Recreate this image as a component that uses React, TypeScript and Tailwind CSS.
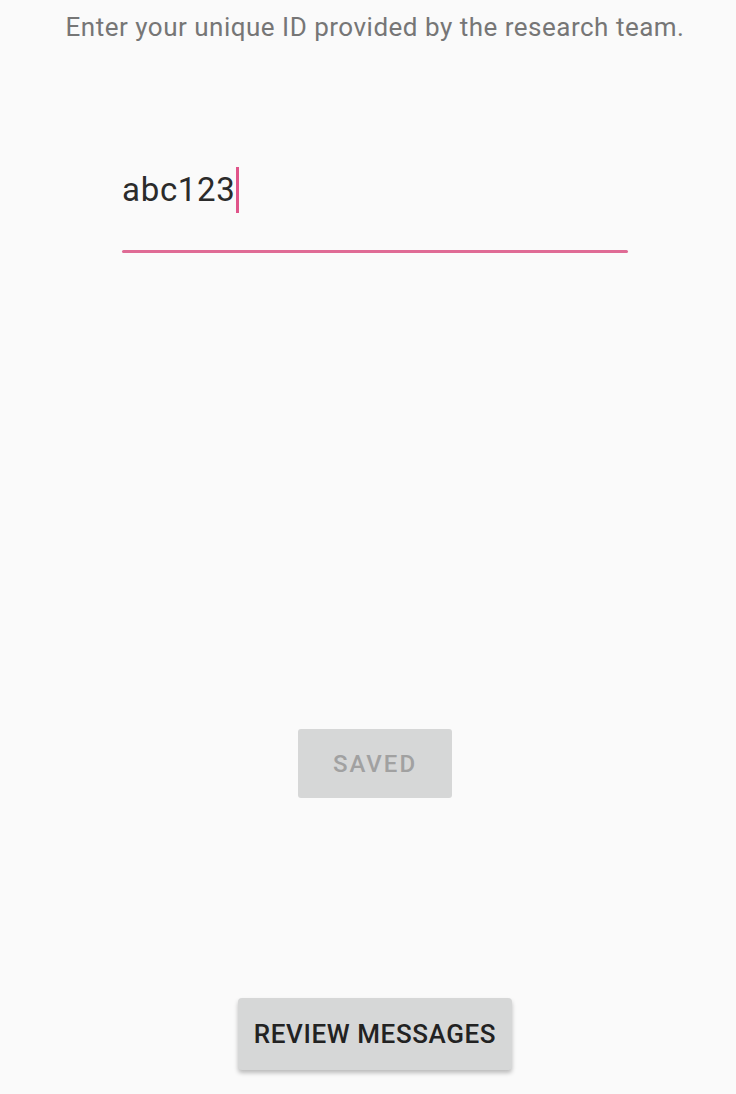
import React from 'react';

const App = () => {
  return (
    <div className="w-[736px] h-[1094px] bg-[#fafafa] font-['Roboto',sans-serif] flex flex-col pl-[14px]">
      <p className="pt-[10px] text-center text-[26px] leading-[34px] tracking-[0.5px] text-[#767676]">
        Enter your unique ID provided by the research team.
      </p>

      <div className="mt-[118px] mx-auto w-[506px]">
        <div className="flex items-center h-[56px] text-[33px] tracking-[0.7px] text-[#2b2b2b]">
          <span>abc123</span>
          <span className="w-[3px] h-[46px] bg-[#e0548a]" />
        </div>
        <div className="mt-[32px] h-[3px] rounded-full bg-[#df6b95]" />
      </div>

      <div className="mt-[476px] flex justify-center">
        <button className="w-[154px] h-[69px] rounded-[3px] bg-[#d6d7d7] text-[24px] font-medium tracking-[2px] text-[#a1a1a1]">
          SAVED
        </button>
      </div>

      <div className="mt-[200px] flex justify-center">
        <button className="w-[274px] h-[72px] rounded-[4px] bg-[#d6d7d7] text-[26px] font-medium tracking-[0.6px] text-[#222] shadow-[0_3px_4px_rgba(0,0,0,0.25)]">
          REVIEW MESSAGES
        </button>
      </div>
    </div>
  );
};

export default App;
